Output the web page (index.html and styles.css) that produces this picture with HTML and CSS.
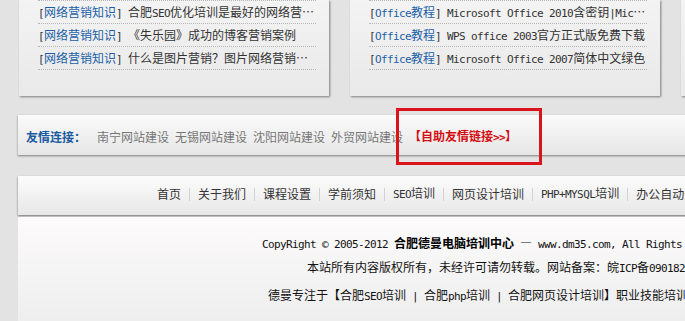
FILE: index.html
```html
<!DOCTYPE html>
<html lang="zh-CN">
<head>
<meta charset="utf-8">
<title>合肥德曼电脑培训中心</title>
<link rel="stylesheet" href="styles.css">
</head>
<body>
<div class="page">
  <div class="cols">
    <div class="box">
      <ul class="list">
        <li><span class="m">[</span><a class="tag">网络营销知识</a><span class="m">] </span><a>合肥<span class="m">SEO</span>优化培训是最好的网络营…</a></li>
        <li><span class="m">[</span><a class="tag">网络营销知识</a><span class="m">] </span><a>《失乐园》成功的博客营销案例</a></li>
        <li><span class="m">[</span><a class="tag">网络营销知识</a><span class="m">] </span><a>什么是图片营销？图片网络营销…</a></li>
      </ul>
    </div>
    <div class="box">
      <ul class="list">
        <li><span class="m">[</span><a class="tag"><span class="m">Office</span>教程</a><span class="m">] </span><a><span class="m">Microsoft Office 2010</span>含密钥<span class="m">|Mic</span>…</a></li>
        <li><span class="m">[</span><a class="tag"><span class="m">Office</span>教程</a><span class="m">] </span><a><span class="m">WPS office 2003</span>官方正式版免费下载</a></li>
        <li><span class="m">[</span><a class="tag"><span class="m">Office</span>教程</a><span class="m">] </span><a><span class="m">Microsoft Office 2007</span>简体中文绿色</a></li>
      </ul>
    </div>
    <div class="box">
      <ul class="list">
        <li><span class="m">[</span><a class="tag">网页设计</a><span class="m">] </span><a>网页设计教程</a></li>
        <li><span class="m">[</span><a class="tag">网页设计</a><span class="m">] </span><a>网页设计教程</a></li>
        <li><span class="m">[</span><a class="tag">网页设计</a><span class="m">] </span><a>网页设计教程</a></li>
      </ul>
    </div>
  </div>

  <div class="friends">
    <span class="flabel">友情连接：</span>
    <a>南宁网站建设</a>
    <a>无锡网站建设</a>
    <a>沈阳网站建设</a>
    <a>外贸网站建设</a>
    <a class="self">【自助友情链接<span class="m">&gt;&gt;</span>】</a>
    <span class="mark"></span>
  </div>

  <div class="nav">
    <a>首页</a><span class="sep"></span>
    <a>关于我们</a><span class="sep"></span>
    <a>课程设置</a><span class="sep"></span>
    <a>学前须知</a><span class="sep"></span>
    <a><span class="m">SEO</span>培训</a><span class="sep"></span>
    <a>网页设计培训</a><span class="sep"></span>
    <a><span class="m">PHP+MYSQL</span>培训</a><span class="sep"></span>
    <a>办公自动化培训</a><span class="sep"></span>
    <a>联系我们</a>
  </div>

  <div class="footer">
    <p class="l1"><span class="m">CopyRight © 2005-2012 </span><b>合肥德曼电脑培训中心</b><span class="m"> </span>—<span class="m"> www.dm35.com, All Rights Reserved.  </span></p>
    <p class="l2">本站所有内容版权所有，未经许可请勿转载。网站备案：皖<span class="m">ICP</span>备<span class="m">09018270</span>号</p>
    <p class="l3">德曼专注于【合肥<span class="m">SEO</span>培训<span class="m"> | </span>合肥<span class="m">php</span>培训<span class="m"> | </span>合肥网页设计培训】职业技能培训，值得信赖</p>
  </div>
</div>
</body>
</html>
```

FILE: styles.css
```css
html, body {
  margin: 0;
  padding: 0;
}
body {
  background: #e3e3e3;
  font-family: "Noto Sans CJK SC", "DejaVu Sans", sans-serif;
  font-size: 12px;
  color: #333;
  overflow: hidden;
  width: 685px;
  height: 321px;
}
a { color: inherit; text-decoration: none; }
ul { margin: 0; padding: 0; list-style: none; }
p { margin: 0; }

.m {
  font-family: "DejaVu Sans Mono", "Liberation Mono", monospace;
  font-size: 11px;
  letter-spacing: -0.62px;
  white-space: pre;
}

.page {
  width: 1000px;
  padding-left: 18px;
}

.cols {
  display: grid;
  grid-template-columns: 310px 310px 310px;
  column-gap: 21px;
  padding-left: 1px;
}
.box {
  height: 96px;
  padding: 0 13px 0 19px;
  background: linear-gradient(to bottom, #f3f3f3, #e9e9e9);
  box-shadow: 1px 1px 2px rgba(0, 0, 0, 0.45);
  box-sizing: border-box;
}
.list {
  border-top: 1px dotted #b5b5b5;
}
.list li {
  height: 22px;
  line-height: 22px;
  border-bottom: 1px dotted #b5b5b5;
  white-space: nowrap;
  overflow: hidden;
  color: #333;
}
.list .tag { color: #1c5fa8; }

.friends {
  position: relative;
  margin-top: 19px;
  height: 40px;
  box-sizing: border-box;
  padding: 12px 0 8px 8px;
  line-height: 20px;
  display: flex;
  align-items: center;
  gap: 6px;
  background: linear-gradient(to bottom, #fafafa, #e6e6e6);
  box-shadow: 0 1px 2px rgba(0, 0, 0, 0.45);
  color: #777;
}
.flabel {
  color: #1a5aa0;
  font-weight: bold;
  margin-right: 5px;
}
.friends .self {
  color: #d40d12;
  font-weight: bold;
}
.mark {
  position: absolute;
  left: 378px;
  top: -7px;
  width: 146px;
  height: 57px;
  border: 3px solid #d9141b;
  box-sizing: border-box;
}

.nav {
  margin-top: 21px;
  height: 39px;
  box-sizing: border-box;
  padding: 8px 0 11px 139px;
  line-height: 20px;
  display: flex;
  align-items: center;
  gap: 8px;
  background: linear-gradient(to bottom, #fdfcfc, #e7e7e7);
  box-shadow: 0 1px 2px rgba(0, 0, 0, 0.5);
  color: #333;
  white-space: nowrap;
}
.sep {
  width: 1px;
  height: 13px;
  background: #d2d2d2;
}

.footer {
  margin-top: 2px;
  height: 120px;
  padding: 15px 20px 0 0;
  box-sizing: border-box;
  background: linear-gradient(to bottom, #fdfbfb, #ececec);
  color: #111;
  text-align: center;
  white-space: nowrap;
}
.footer p { line-height: 22px; }
.footer .l3 { margin-top: 4px; }
.footer b { font-weight: bold; color: #000; }
```
